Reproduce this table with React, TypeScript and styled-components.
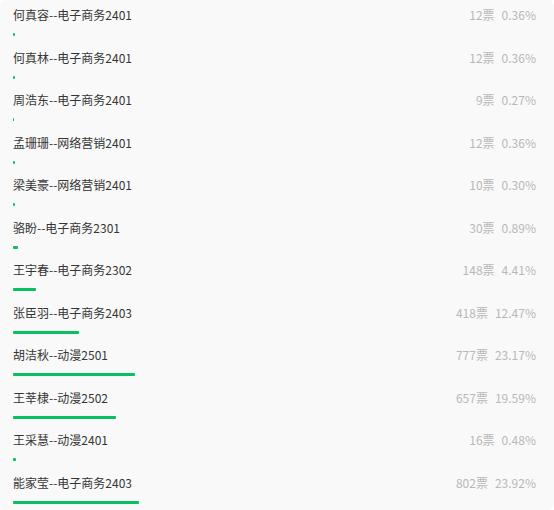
import React from 'react';
import styled, { createGlobalStyle } from 'styled-components';

const GlobalStyle = createGlobalStyle`
  html, body {
    margin: 0;
    padding: 0;
    background: #ffffff;
  }
  body {
    font-family: "Noto Sans CJK SC", "Noto Sans", sans-serif;
  }
`;

type Candidate = { name: string; votes: number; percent: number };

const candidates: Candidate[] = [
  { name: '何真容--电子商务2401', votes: 12, percent: 0.36 },
  { name: '何真林--电子商务2401', votes: 12, percent: 0.36 },
  { name: '周浩东--电子商务2401', votes: 9, percent: 0.27 },
  { name: '孟珊珊--网络营销2401', votes: 12, percent: 0.36 },
  { name: '梁美豪--网络营销2401', votes: 10, percent: 0.3 },
  { name: '骆盼--电子商务2301', votes: 30, percent: 0.89 },
  { name: '王宇春--电子商务2302', votes: 148, percent: 4.41 },
  { name: '张臣羽--电子商务2403', votes: 418, percent: 12.47 },
  { name: '胡洁秋--动漫2501', votes: 777, percent: 23.17 },
  { name: '王莘棣--动漫2502', votes: 657, percent: 19.59 },
  { name: '王采慧--动漫2401', votes: 16, percent: 0.48 },
  { name: '能家莹--电子商务2403', votes: 802, percent: 23.92 },
];

const Panel = styled.div`
  width: 554px;
  height: 510px;
  box-sizing: border-box;
  padding: 5px 14px 0 13px;
  background: #f9f9f9;
  border-radius: 6px;
  overflow: hidden;
`;

const Row = styled.div`
  height: 42.5px;
  display: flex;
  flex-direction: column;
`;

const Line = styled.div`
  display: flex;
  align-items: center;
  justify-content: space-between;
  height: 20px;
  line-height: 20px;
`;

const Name = styled.span`
  font-size: 12px;
  color: #353535;
`;

const Stats = styled.span`
  display: flex;
  gap: 7px;
  margin-right: 4px;
  font-size: 12px;
  color: #b8b8b8;
`;

const Track = styled.div`
  margin-top: 8px;
  height: 3px;
  width: 100%;
`;

const Fill = styled.div`
  height: 100%;
  min-width: 1px;
  background: #07c160;
  border-radius: 1px;
`;

export default function App() {
  return (
    <>
      <GlobalStyle />
      <Panel>
        {candidates.map((c) => (
          <Row key={c.name}>
            <Line>
              <Name>{c.name}</Name>
              <Stats>
                <span>{c.votes}票</span>
                <span>{c.percent.toFixed(2)}%</span>
              </Stats>
            </Line>
            <Track>
              <Fill style={{ width: `${c.percent}%` }} />
            </Track>
          </Row>
        ))}
      </Panel>
    </>
  );
}
